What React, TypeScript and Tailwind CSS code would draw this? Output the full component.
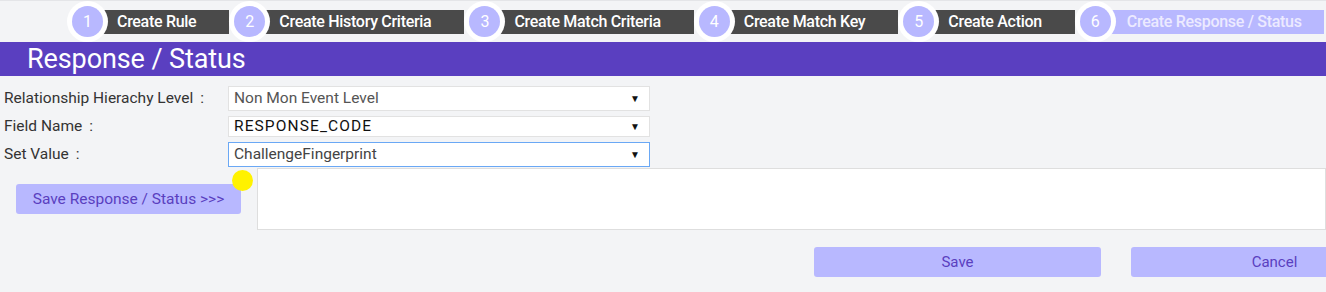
import React, { FC } from "react";

const steps = [
  "Create Rule",
  "Create History Criteria",
  "Create Match Criteria",
  "Create Match Key",
  "Create Action",
  "Create Response / Status",
];

const fields = [
  { label: "Relationship Hierachy Level", value: "Non Mon Event Level", text: "text-[#555]", box: "h-[25px] border-[#e2e2e2]" },
  { label: "Field Name", value: "RESPONSE_CODE", text: "text-[#111] tracking-[1.1px]", box: "h-[21px] border-[#e2e2e2]" },
  { label: "Set Value", value: "ChallengeFingerprint", text: "text-[#444]", box: "h-[25px] border-[#6aa8f5]" },
];

const App: FC = () => {
  return (
    <div className="w-[1326px] h-[292px] overflow-hidden bg-[#f3f4f6] border-t border-[#e4e5e8] font-['Roboto',sans-serif]">
      {/* wizard steps */}
      <div className="flex items-center pl-[67px] h-[41px]">
        {steps.map((s, i) => {
          const last = i === steps.length - 1;
          return (
            <div key={s} className="flex items-center">
              <div className="relative z-10 w-[41px] h-[41px] rounded-full bg-white flex items-center justify-center -mr-[20px]">
                <div className="w-[31px] h-[31px] rounded-full bg-[#b8b8ff] flex items-center justify-center text-white text-[16px]">
                  {i + 1}
                </div>
              </div>
              <div
                className={
                  last
                    ? "h-6 flex items-center pl-[31px] pr-[22px] bg-[#b8b8ff] text-[#eceaff] text-[16px] font-medium tracking-[-0.3px]"
                    : "h-6 flex items-center pl-[29px] pr-[33px] bg-[#4a4a4a] text-white text-[16px] font-medium tracking-[-0.3px]"
                }
              >
                {s}
              </div>
            </div>
          );
        })}
      </div>

      {/* section header */}
      <div className="h-[34px] bg-[#5a3fc0] flex items-center pl-[27px]">
        <h1 className="text-white text-[27px] leading-none tracking-[-0.1px]">Response / Status</h1>
      </div>

      {/* form rows */}
      <div className="pt-[10px] flex flex-col gap-[4px]">
        {fields.map((f) => (
          <div key={f.label} className="flex items-center">
            <label className="w-[228px] pl-[4px] text-[15.5px] text-[#333]">
              {f.label}
              <span className="ml-[7px]">:</span>
            </label>
            <div className={`w-[422px] ${f.box} border bg-white flex items-center justify-between pl-[5px] pr-[9px]`}>
              <span className={`text-[15.5px] ${f.text}`}>{f.value}</span>
              <span className="text-[10px] text-[#111]">▼</span>
            </div>
          </div>
        ))}
      </div>

      {/* save response + textarea */}
      <div className="flex items-start mt-[1px]">
        <div className="relative pl-[16px] pt-[16px]">
          <button className="w-[225px] h-[30px] rounded-[3px] bg-[#b8b8ff] text-[#5a3fc0] text-[15.5px]">
            Save Response / Status &gt;&gt;&gt;
          </button>
          <span className="absolute left-[232px] top-[2px] w-[21px] h-[21px] rounded-full bg-[#fff200]" />
        </div>
        <div className="ml-[16px] flex-1 h-[62px] bg-white border border-[#dedede]" />
      </div>

      {/* bottom buttons */}
      <div className="flex gap-[30px] pl-[814px] mt-[17px]">
        <button className="shrink-0 w-[287px] h-[30px] rounded-[3px] bg-[#b8b8ff] text-[#5a3fc0] text-[15px]">Save</button>
        <button className="shrink-0 w-[287px] h-[30px] rounded-[3px] bg-[#b8b8ff] text-[#5a3fc0] text-[15px]">Cancel</button>
      </div>
    </div>
  );
};

export default App;
